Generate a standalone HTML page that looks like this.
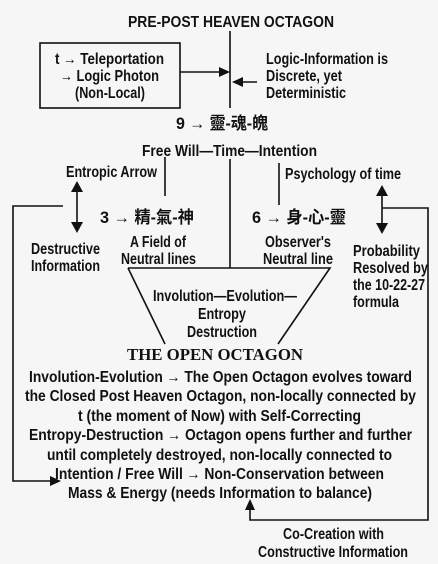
<!DOCTYPE html>
<html><head><meta charset="utf-8"><style>
html,body{margin:0;padding:0;background:#f6f6f6;}
svg{display:block}
text{font-family:"Liberation Sans","Noto Sans CJK TC",sans-serif;font-weight:bold;font-size:15.5px;fill:#111}
.c{font-size:17px;font-weight:bold}
.s{font-family:"Liberation Serif",serif;font-size:17px}
</style></head><body>
<svg width="438" height="564" viewBox="0 0 438 564" xmlns="http://www.w3.org/2000/svg">
<rect width="438" height="564" fill="#f6f6f6"/>
<g stroke="#111" stroke-width="1.6" fill="none">
<line x1="230" y1="31" x2="230" y2="108"/>
<rect x="40" y="43" width="140" height="65"/>
<line x1="180" y1="72" x2="222" y2="72"/>
<line x1="257" y1="82" x2="240" y2="82"/>
<line x1="165" y1="157" x2="165" y2="196"/>
<line x1="230" y1="159" x2="230" y2="268"/>
<line x1="279" y1="163" x2="279" y2="205"/>
<line x1="77" y1="190" x2="77" y2="225"/>
<line x1="382" y1="194" x2="382" y2="226"/>
<polyline points="128,268 330,268 278,344"/>
<line x1="128" y1="268" x2="165" y2="344"/>
<polyline points="63,206 13,206 13,481 52,481"/>
<polyline points="382,208 428,208 428,520 250,520 250,508"/>
</g>
<g fill="#111">
<polygon points="230,72 219,67 219,77"/>
<polygon points="232,82 243,77 243,87"/>
<polygon points="77,181 71,192 83,192"/>
<polygon points="77,233 71,222 83,222"/>
<polygon points="382,185 376,196 388,196"/>
<polygon points="382,234 376,223 388,223"/>
<polygon points="61,481 50,476 50,486"/>
<polygon points="250,499 245,510 255,510"/>
</g>
<text x="128" y="27" textLength="206" lengthAdjust="spacingAndGlyphs">PRE-POST HEAVEN OCTAGON</text>
<text x="55" y="64" textLength="109" lengthAdjust="spacingAndGlyphs">t → Teleportation</text>
<text x="60" y="81" textLength="99" lengthAdjust="spacingAndGlyphs">→ Logic Photon</text>
<text x="75" y="98" textLength="70" lengthAdjust="spacingAndGlyphs">(Non-Local)</text>
<text x="266" y="64" textLength="122" lengthAdjust="spacingAndGlyphs">Logic-Information is</text>
<text x="266" y="81" textLength="76" lengthAdjust="spacingAndGlyphs">Discrete, yet</text>
<text x="266" y="98" textLength="80" lengthAdjust="spacingAndGlyphs">Deterministic</text>
<text class="c" x="176" y="129" textLength="92" lengthAdjust="spacingAndGlyphs">9 → 靈-魂-魄</text>
<text x="142" y="156" textLength="175" lengthAdjust="spacingAndGlyphs">Free Will—Time—Intention</text>
<text x="66" y="177" textLength="91" lengthAdjust="spacingAndGlyphs">Entropic Arrow</text>
<text x="285" y="179" textLength="116" lengthAdjust="spacingAndGlyphs">Psychology of time</text>
<text class="c" x="100" y="223" textLength="94" lengthAdjust="spacingAndGlyphs">3 → 精-氣-神</text>
<text class="c" x="252" y="223" textLength="94" lengthAdjust="spacingAndGlyphs">6 → 身-心-靈</text>
<text x="31" y="254" textLength="69" lengthAdjust="spacingAndGlyphs">Destructive</text>
<text x="31" y="271" textLength="69" lengthAdjust="spacingAndGlyphs">Information</text>
<text x="130" y="247" textLength="56" lengthAdjust="spacingAndGlyphs">A Field of</text>
<text x="121" y="264" textLength="75" lengthAdjust="spacingAndGlyphs">Neutral lines</text>
<text x="265" y="247" textLength="66" lengthAdjust="spacingAndGlyphs">Observer's</text>
<text x="263" y="264" textLength="70" lengthAdjust="spacingAndGlyphs">Neutral line</text>
<text x="353" y="256" textLength="67" lengthAdjust="spacingAndGlyphs">Probability</text>
<text x="353" y="273" textLength="75" lengthAdjust="spacingAndGlyphs">Resolved by</text>
<text x="353" y="290" textLength="72" lengthAdjust="spacingAndGlyphs">the 10-22-27</text>
<text x="353" y="307" textLength="46" lengthAdjust="spacingAndGlyphs">formula</text>
<text x="153" y="301" textLength="144" lengthAdjust="spacingAndGlyphs">Involution—Evolution—</text>
<text x="198" y="319" textLength="48" lengthAdjust="spacingAndGlyphs">Entropy</text>
<text x="187" y="337" textLength="70" lengthAdjust="spacingAndGlyphs">Destruction</text>
<text class="s" x="127" y="360" textLength="176" lengthAdjust="spacingAndGlyphs">THE OPEN OCTAGON</text>
<text x="29" y="382" textLength="383" lengthAdjust="spacingAndGlyphs">Involution-Evolution → The Open Octagon evolves toward</text>
<text x="25" y="401" textLength="391" lengthAdjust="spacingAndGlyphs">the Closed Post Heaven Octagon, non-locally connected by</text>
<text x="78" y="421" textLength="283" lengthAdjust="spacingAndGlyphs">t (the moment of Now) with Self-Correcting</text>
<text x="29" y="440" textLength="383" lengthAdjust="spacingAndGlyphs">Entropy-Destruction → Octagon opens further and further</text>
<text x="47" y="460" textLength="345" lengthAdjust="spacingAndGlyphs">until completely destroyed, non-locally connected to</text>
<text x="55" y="479" textLength="329" lengthAdjust="spacingAndGlyphs">Intention / Free Will → Non-Conservation between</text>
<text x="68" y="498" textLength="304" lengthAdjust="spacingAndGlyphs">Mass &amp; Energy (needs Information to balance)</text>
<text x="283" y="539" textLength="101" lengthAdjust="spacingAndGlyphs">Co-Creation with</text>
<text x="258" y="557" textLength="150" lengthAdjust="spacingAndGlyphs">Constructive Information</text>
</svg>
</body></html>
